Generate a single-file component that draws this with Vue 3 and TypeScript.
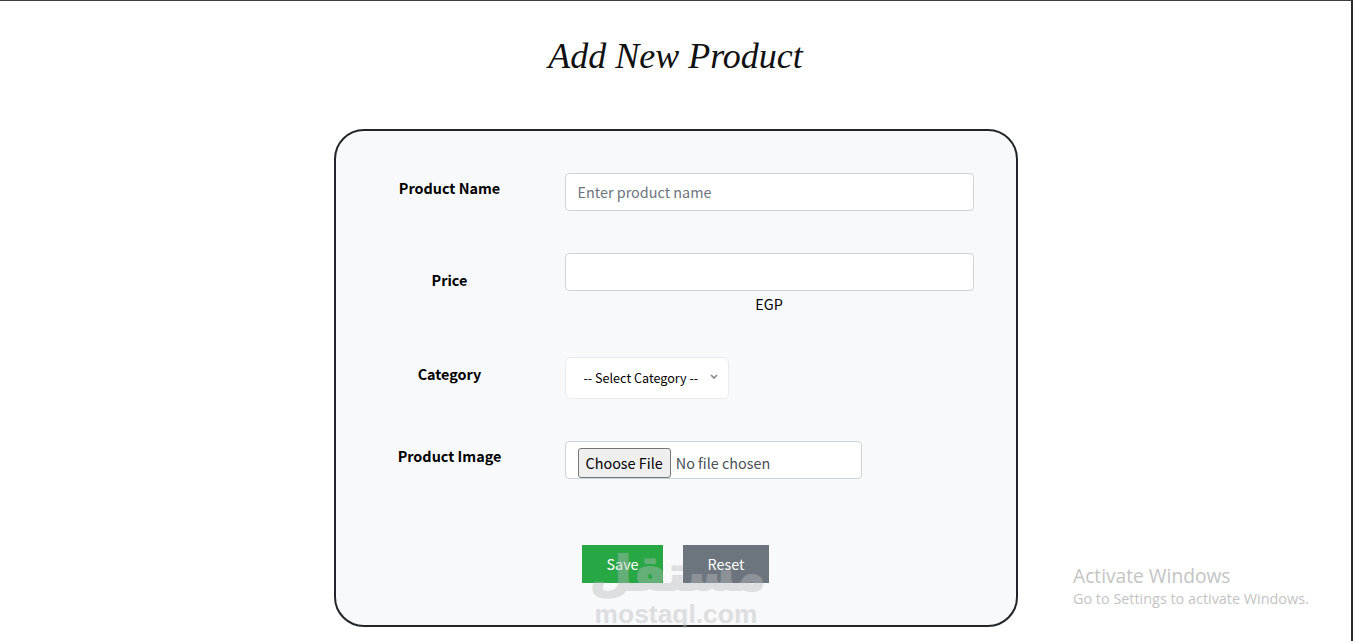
<template>
  <div class="page">
    <h1 class="title">Add New Product</h1>

    <form class="product-form" @submit.prevent>
      <div class="form-row">
        <label class="form-label" for="name">Product Name</label>
        <input id="name" v-model="name" class="form-control" type="text" placeholder="Enter product name" />
      </div>

      <div class="form-row">
        <label class="form-label" for="price">Price</label>
        <div>
          <input id="price" v-model="price" class="form-control" type="text" />
          <div class="currency">EGP</div>
        </div>
      </div>

      <div class="form-row">
        <label class="form-label" for="category">Category</label>
        <div class="select-wrap">
          <select id="category" v-model="category" class="form-select">
            <option value="">-- Select Category --</option>
            <option v-for="c in categories" :key="c" :value="c">{{ c }}</option>
          </select>
          <svg class="chevron" width="8" height="6" viewBox="0 0 8 6">
            <path d="M1 1l3 3 3-3" fill="none" stroke="#8a8a8a" stroke-width="1.7" />
          </svg>
        </div>
      </div>

      <div class="form-row">
        <label class="form-label" for="image">Product Image</label>
        <input id="image" class="form-file" type="file" />
      </div>

      <div class="actions">
        <button class="btn btn-save" type="submit">Save</button>
        <button class="btn btn-reset" type="button" @click="reset">Reset</button>
      </div>
    </form>

    <div class="watermark" aria-hidden="true">
      <div class="wm-arabic">مستقل</div>
      <div class="wm-latin">mostaql.com</div>
    </div>

    <div class="activate">
      <div class="activate-title">Activate Windows</div>
      <div class="activate-sub">Go to Settings to activate Windows.</div>
    </div>
  </div>
</template>

<script setup lang="ts">
import { ref } from 'vue'

const categories = ['Electronics', 'Clothing', 'Books']

const name = ref('')
const price = ref('')
const category = ref('')

const reset = () => {
  name.value = ''
  price.value = ''
  category.value = ''
}
</script>

<style>
html,
body {
  margin: 0;
  overflow: hidden;
  background: #fff;
}
</style>

<style scoped>
.page {
  position: relative;
  box-sizing: border-box;
  height: 641px;
  overflow: hidden;
  border-top: 1px solid #3c3f41;
  border-right: 2px solid #2b2b2b;
  font-family: "Noto Sans CJK SC", "Noto Sans", sans-serif;
  font-size: 14.4px;
  color: #000;
}

.title {
  margin: 0;
  padding-top: 30px;
  height: 98px;
  box-sizing: border-box;
  text-align: center;
  font-family: cursive;
  font-style: italic;
  font-weight: 400;
  font-size: 36px;
  line-height: 50px;
  color: #111;
}

.product-form {
  box-sizing: border-box;
  width: 684px;
  height: 498px;
  margin: 30px auto 0;
  padding: 42px;
  background: #f8f9fa;
  border: 2px solid #212529;
  border-radius: 30px;
  display: flex;
  flex-direction: column;
  gap: 42px;
}

.form-row {
  display: grid;
  grid-template-columns: 144px 409px;
  column-gap: 43px;
  align-items: center;
}

.form-label {
  margin-bottom: 8px;
  text-align: center;
  font-weight: 700;
  line-height: 24px;
  white-space: nowrap;
}

.form-control {
  display: block;
  box-sizing: border-box;
  width: 409px;
  height: 38px;
  padding: 5px 12px 7px;
  border: 1px solid #ced4da;
  border-radius: 4px;
  background: #fff;
  font: inherit;
  color: #212529;
}

.form-control::placeholder {
  color: #6c757d;
  opacity: 1;
}

.currency {
  padding-top: 1px;
  text-align: center;
  line-height: 23px;
}

.select-wrap {
  position: relative;
  width: 164px;
  height: 42px;
}

.form-select {
  box-sizing: border-box;
  width: 164px;
  height: 42px;
  padding: 0 8px 2px 18px;
  border: 1px solid #e9ecef;
  border-radius: 6px;
  background: #fff;
  font-family: inherit;
  font-size: 12.6px;
  color: #000;
  appearance: none;
}

.chevron {
  position: absolute;
  left: 145px;
  top: 17px;
  pointer-events: none;
}

.form-file {
  box-sizing: border-box;
  width: 297px;
  height: 38px;
  padding: 6px 12px;
  border: 1px solid #ced4da;
  border-radius: 4px;
  background: #fff;
  font-family: inherit;
  font-size: 14.4px;
  line-height: 22px;
  color: #495057;
  overflow: hidden;
}

.form-file::file-selector-button {
  height: 30px;
  margin-right: 5px;
  padding: 0 7px;
  border: 1px solid #767676;
  border-radius: 3px;
  background: #efefef;
  font: inherit;
  color: #000;
}

.actions {
  display: flex;
  justify-content: center;
  gap: 20px;
  margin-top: 24px;
}

.btn {
  height: 38px;
  padding: 0 0 2px;
  border: none;
  border-radius: 0;
  font-family: inherit;
  font-size: 14.4px;
  color: #fff;
}

.btn-save {
  width: 81px;
  background: #28a745;
}

.btn-reset {
  width: 86px;
  background: #6c757d;
}

.watermark {
  position: absolute;
  left: 590px;
  top: 534px;
  width: 172px;
  text-align: center;
  color: #b8babe;
  opacity: 0.42;
  pointer-events: none;
}

.wm-arabic {
  padding-top: 8px;
  font-family: "DejaVu Sans", sans-serif;
  font-weight: 700;
  font-size: 48px;
  line-height: 60px;
  white-space: nowrap;
  -webkit-text-stroke: 2px #b8babe;
}

.wm-latin {
  margin-top: -3px;
  font-family: "Liberation Sans", sans-serif;
  font-weight: 700;
  font-size: 26.4px;
  line-height: 28px;
}

.activate {
  position: absolute;
  left: 1073px;
  top: 562px;
  color: #c4c4c4;
  font-family: "Open Sans", sans-serif;
  white-space: nowrap;
}

.activate-title {
  font-size: 19.2px;
  line-height: 26px;
}

.activate-sub {
  font-size: 14.4px;
  line-height: 19px;
}
</style>
